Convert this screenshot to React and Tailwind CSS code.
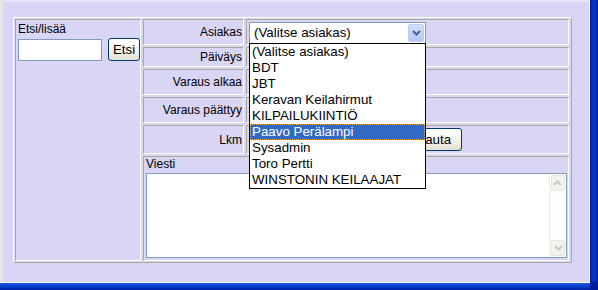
const customers = [
  "(Valitse asiakas)",
  "BDT",
  "JBT",
  "Keravan Keilahirmut",
  "KILPAILUKIINTIÖ",
  "Paavo Perälampi",
  "Sysadmin",
  "Toro Pertti",
  "WINSTONIN KEILAAJAT",
];

const inset =
  "border border-t-[#aca899] border-l-[#aca899] border-r-white border-b-white";

const XpButton = ({ children, className = "" }) => (
  <button
    className={`h-[23px] rounded-[3px] border border-[#003c74] bg-gradient-to-b from-white via-[#f6f5f0] to-[#e3e0d2] text-[13.33px] leading-none text-black ${className}`}
  >
    {children}
  </button>
);

const FormRow = ({ label, height, children }) => (
  <div className={`flex gap-[2px] ${height}`}>
    <div
      className={`${inset} w-[101px] flex items-center justify-end pr-[1px] text-[12px]`}
    >
      {label}
    </div>
    <div className={`${inset} flex-1 flex items-center pl-[2px]`}>
      {children}
    </div>
  </div>
);

const Chevron = ({ color }) => (
  <svg width="9" height="6" viewBox="0 0 9 6">
    <path d="M1 1 L4.5 4.5 L8 1" fill="none" stroke={color} strokeWidth="2" />
  </svg>
);

export default function App() {
  return (
    <div className="w-[598px] h-[290px] flex flex-col overflow-hidden font-['Liberation_Sans',Arial,sans-serif] text-black">
      <div className="flex flex-1 min-h-0">
        <div className="w-[3px] bg-[#e4e3e8]" />
        <div className="flex-1 bg-[#d8d5f5] border-t-2 border-[#e6e4f7] pl-[10px] pt-[15px]">
          {/* main table */}
          <div className="w-[559px] h-[246px] border border-t-white border-l-white border-r-[#aca899] border-b-[#aca899] pt-[1px] pb-[1px] pl-[1px] pr-[2px] flex gap-[2px]">
            {/* search cell */}
            <div className={`${inset} w-[126px] pl-[2px] pt-[2px]`}>
              <div className="text-[12px] leading-[14px]">Etsi/lisää</div>
              <div className="flex items-start mt-[2px]">
                <input
                  className="mt-[1px] w-[84px] h-[22px] border border-[#7f9db9] bg-white outline-none"
                  defaultValue=""
                />
                <XpButton className="ml-[6px] w-[32px]">Etsi</XpButton>
              </div>
            </div>

            {/* form column */}
            <div className="w-[426px] flex flex-col gap-[2px]">
              <FormRow label="Asiakas" height="h-[26px]">
                <div className="relative mt-[1px] z-10">
                  <div className="w-[177px] h-[22px] border border-[#7f9db9] bg-white flex items-center justify-between pl-[4px] pr-[1px]">
                    <span className="text-[13.33px]">(Valitse asiakas)</span>
                    <div className="w-[16px] h-[18px] rounded-[2px] border border-[#b9cdf6] bg-gradient-to-b from-[#d2defc] to-[#b3c7f5] flex items-center justify-center">
                      <Chevron color="#4d6185" />
                    </div>
                  </div>
                  <div className="absolute left-0 top-[21px] w-[177px] border border-black bg-white">
                    {customers.map((c) => (
                      <div
                        key={c}
                        className={`h-[16px] pl-[2px] text-[13.33px] leading-[16px] whitespace-nowrap ${
                          c === "Paavo Perälampi"
                            ? "bg-[#316ac5] text-white outline outline-1 -outline-offset-1 outline-dotted outline-[#f0b040]"
                            : ""
                        }`}
                      >
                        {c}
                      </div>
                    ))}
                  </div>
                </div>
              </FormRow>
              <FormRow label="Päiväys" height="h-[20px]" />
              <FormRow label="Varaus alkaa" height="h-[26px]">
                <input className="w-[90px] h-[20px] border border-[#7f9db9] bg-white" />
              </FormRow>
              <FormRow label="Varaus päättyy" height="h-[26px]">
                <input className="w-[90px] h-[20px] border border-[#7f9db9] bg-white" />
              </FormRow>
              <FormRow label="Lkm" height="h-[29px]">
                <input className="w-[140px] h-[20px] border border-[#7f9db9] bg-white" />
                <XpButton className="ml-[6px] w-[67px]">Palauta</XpButton>
              </FormRow>

              {/* message */}
              <div className={`${inset} flex-1 flex flex-col pl-[1px]`}>
                <div className="text-[12px] leading-[15px] pl-[1px]">Viesti</div>
                <div className="mt-[1px] ml-[1px] w-[421px] h-[85px] border border-[#7f9db9] bg-white flex">
                  <div className="flex-1" />
                  <div className="w-[17px] border-l border-[#eeede5] bg-[#fdfdfa] flex flex-col justify-between p-[1px]">
                    <div className="h-[16px] rounded-[2px] border border-[#e6e5dc] bg-[#f3f2ec] flex items-center justify-center rotate-180">
                      <Chevron color="#c9c8bf" />
                    </div>
                    <div className="h-[16px] rounded-[2px] border border-[#e6e5dc] bg-[#f3f2ec] flex items-center justify-center">
                      <Chevron color="#c9c8bf" />
                    </div>
                  </div>
                </div>
              </div>
            </div>
          </div>
        </div>
        <div className="w-px bg-white" />
        <div className="w-[8px] bg-gradient-to-r from-[#0018a0] via-[#0a3ad8] to-[#001c98]" />
      </div>
      <div className="flex h-[8px]">
        <div className="flex-1 flex flex-col">
          <div className="h-px bg-white" />
          <div className="flex-1 bg-gradient-to-b from-[#1a5ae8] to-[#0020a8]" />
        </div>
        <div className="w-[8px] bg-[#001c98]" />
      </div>
    </div>
  );
}
